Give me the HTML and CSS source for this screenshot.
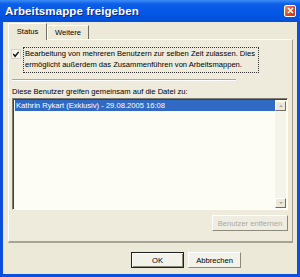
FILE: index.html
```html
<!DOCTYPE html>
<html lang="de">
<head>
  <meta charset="UTF-8" />
  <title>Arbeitsmappe freigeben</title>
  <link rel="stylesheet" href="styles.css">
</head>
<body>
  <div class="window">
    <div class="titlebar">
      <span class="title">Arbeitsmappe freigeben</span>
      <span class="close">
        <svg width="7" height="7" viewBox="0 0 7 7"><path d="M1 1 L6 6 M6 1 L1 6" stroke="#fff" stroke-width="1.6"/></svg>
      </span>
    </div>

    <div class="client">
      <div class="tabs">
        <div class="tab active">Status</div>
        <div class="tab">Weitere</div>
      </div>

      <div class="panel">
        <div class="check-row">
          <span class="checkbox">
            <svg width="9" height="9" viewBox="0 0 9 9"><path d="M1.5 4 L3.5 6.5 L7.5 1.5" stroke="#111" stroke-width="1.6" fill="none"/></svg>
          </span>
          <span class="check-label">Bearbeitung von mehreren Benutzern zur selben Zeit zulassen. Dies ermöglicht außerdem das Zusammenführen von Arbeitsmappen.</span>
        </div>

        <div class="separator"></div>

        <div class="list-label">Diese Benutzer greifen gemeinsam auf die Datei zu:</div>

        <div class="listbox">
          <div class="rows">
            <div class="row selected">Kathrin Rykart (Exklusiv) - 29.08.2005 16:08</div>
          </div>
          <div class="scrollbar">
            <span class="arrow up"></span>
            <span class="arrow down"></span>
          </div>
        </div>

        <div class="panel-actions">
          <button class="btn disabled">Benutzer entfernen</button>
        </div>
      </div>

      <div class="dialog-actions">
        <button class="btn default">OK</button>
        <button class="btn">Abbrechen</button>
      </div>
    </div>
  </div>
</body>
</html>
```

FILE: styles.css
```css
* {
  margin: 0;
  padding: 0;
  box-sizing: border-box;
}

body {
  width: 300px;
  height: 277px;
  font-family: 'Liberation Sans', Arial, sans-serif;
  font-size: 7.6px;
  color: #000;
  overflow: hidden;
}

.window {
  width: 300px;
  height: 277px;
  display: flex;
  flex-direction: column;
  background-color: #0b4fde;
}

.titlebar {
  height: 22px;
  display: flex;
  align-items: center;
  justify-content: space-between;
  padding: 0 4px 1px 5px;
  background: linear-gradient(#3d8cf8 0%, #0d5fe8 18%, #0457e6 55%, #034fd9 100%);
}

.title {
  color: #fff;
  font-weight: bold;
  font-size: 11.5px;
  letter-spacing: 0.1px;
  text-shadow: 1px 1px 0 #0a2a8a;
}

.close {
  width: 12px;
  height: 12px;
  border: 1px solid #fff;
  border-radius: 2px;
  background: linear-gradient(135deg, #f29170, #e0491e 55%, #c8380f);
  display: flex;
  align-items: center;
  justify-content: center;
}

.client {
  flex: 1;
  margin: 0 3px 3px 3px;
  background-color: #ece9d8;
  padding: 1px 4px 0 5px;
  display: flex;
  flex-direction: column;
}

/* Tabs */
.tabs {
  display: flex;
  align-items: flex-end;
  height: 16px;
}

.tab {
  height: 14px;
  padding: 0 7px;
  display: flex;
  align-items: center;
  border-left: 1px solid #fff;
  border-top: 1px solid #fff;
  border-right: 1px solid #716f64;
  background-color: #ece9d8;
}

.tab.active {
  height: 17px;
  padding: 0 8px 1px 8px;
  margin-bottom: -1px;
  position: relative;
  z-index: 1;
  width: 39px;
  justify-content: center;
}

.panel {
  height: 204px;
  border-left: 1px solid #fff;
  border-top: 1px solid #fff;
  border-right: 1px solid #9d9b8f;
  border-bottom: 2px solid #a5a394;
  background-color: #eeebdc;
  padding: 7px 4px 0 3px;
  display: flex;
  flex-direction: column;
}

.check-row {
  display: flex;
  align-items: flex-start;
  margin-left: -1px;
}

.checkbox {
  width: 10px;
  height: 10px;
  margin-top: 2px;
  background-color: #f7f6ef;
  border: 1px solid #d6d3c4;
  display: flex;
  align-items: center;
  justify-content: center;
}

.check-label {
  width: 236px;
  margin-left: 2px;
  padding: 1px 1px 2px 1px;
  line-height: 10.5px;
  border: 1px dotted #333;
}

.separator {
  width: 224px;
  margin-top: 6px;
  border-top: 1px solid #aca899;
  border-bottom: 1px solid #fff;
}

.list-label {
  margin-top: 6px;
  line-height: 10px;
}

.listbox {
  margin-top: 1px;
  height: 112px;
  width: 276px;
  display: flex;
  border-top: 1px solid #7f7d72;
  border-left: 1px solid #7f7d72;
  border-right: 1px solid #fff;
  border-bottom: 1px solid #fff;
  box-shadow: inset 1px 1px 0 #404040;
  background-color: #fdfdf5;
}

.rows {
  flex: 1;
  padding: 1px 0 0 2px;
}

.row {
  height: 11px;
  line-height: 11px;
  padding-left: 1px;
}

.row.selected {
  background-color: #316ac5;
  color: #fff;
}

.scrollbar {
  width: 11px;
  margin: 2px 1px 1px 0;
  display: flex;
  flex-direction: column;
  justify-content: space-between;
  background-color: #f5f4ea;
}

.arrow {
  width: 11px;
  height: 10px;
  background-color: #ece9d8;
  border-left: 1px solid #fff;
  border-top: 1px solid #fff;
  border-right: 1px solid #716f64;
  border-bottom: 1px solid #716f64;
  display: flex;
  align-items: center;
  justify-content: center;
}

.arrow::after {
  content: "";
  border-left: 2px solid transparent;
  border-right: 2px solid transparent;
}

.arrow.up::after {
  border-bottom: 2px solid #a7a596;
}

.arrow.down::after {
  border-top: 2px solid #a7a596;
}

.panel-actions {
  display: flex;
  justify-content: flex-end;
  margin-top: 5px;
  padding-right: 0;
}

/* Buttons */
.btn {
  font-family: 'Liberation Sans', Arial, sans-serif;
  font-size: 7.6px;
  height: 16px;
  background-color: #f3f2ea;
  border: 1px solid #fff;
  border-right-color: #8b8979;
  border-bottom-color: #8b8979;
  color: #000;
}

.btn.disabled {
  width: 76px;
  color: #aca899;
  background-color: #efede2;
}

.dialog-actions {
  display: flex;
  justify-content: flex-end;
  gap: 4px;
  margin-top: 9px;
  padding-right: 52px;
}

.dialog-actions .btn {
  width: 53px;
}

.btn.default {
  border: 1px solid #202020;
  box-shadow: inset 1px 1px 0 #fff, inset -1px -1px 0 #8b8979;
}
```
